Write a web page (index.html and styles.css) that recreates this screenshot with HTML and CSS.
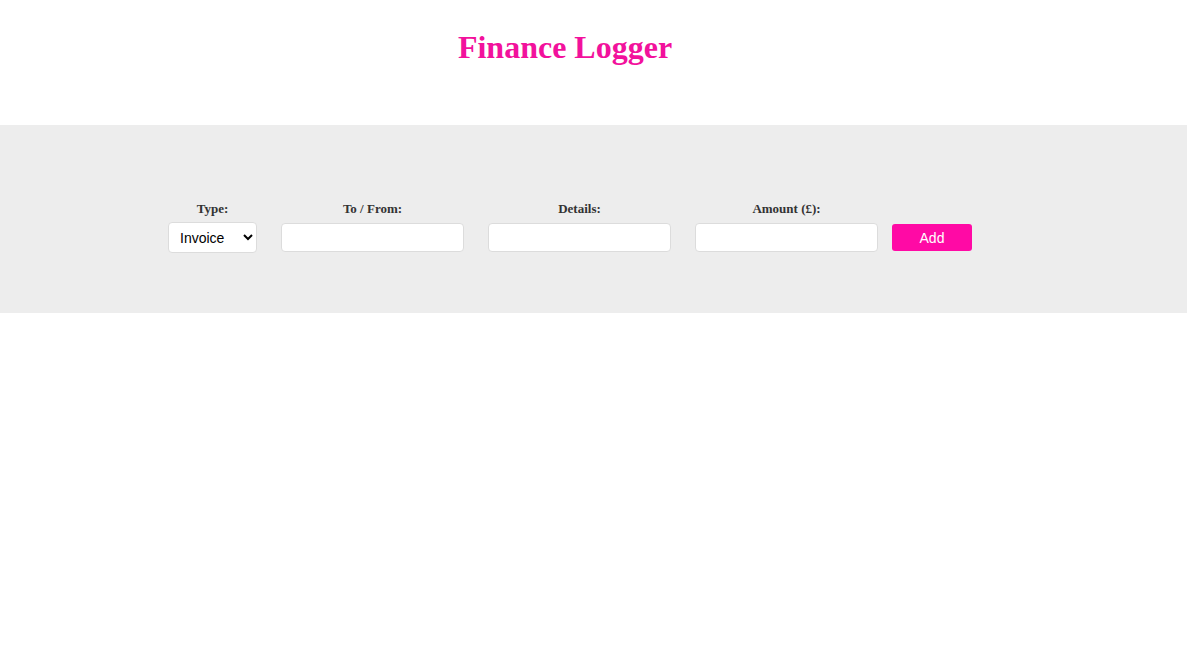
FILE: index.html
```html
<!DOCTYPE html>
<html lang="en">
<head>
<meta charset="utf-8">
<title>Finance Logger</title>
<link rel="stylesheet" href="styles.css">
</head>
<body>
<header class="header">
  <h1 class="title">Finance Logger</h1>
</header>
<section class="band">
  <form class="form">
    <div class="field field-type">
      <label class="label">Type:</label>
      <select class="select">
        <option>Invoice</option>
        <option>Payment</option>
      </select>
    </div>
    <div class="field">
      <label class="label">To / From:</label>
      <input class="input" type="text">
    </div>
    <div class="field">
      <label class="label">Details:</label>
      <input class="input" type="text">
    </div>
    <div class="field field-last">
      <label class="label">Amount (£):</label>
      <input class="input" type="number">
    </div>
    <button class="btn" type="button">Add</button>
  </form>
</section>
</body>
</html>
```
FILE: styles.css
```css
* { box-sizing: border-box; }
html, body { margin: 0; padding: 0; background: #fff; }
body { font-family: "Liberation Serif", "Times New Roman", serif; }

.header {
  height: 125px;
  padding: 29px 57px 0 0;
  text-align: center;
}
.title {
  margin: 0;
  font-size: 32px;
  font-weight: bold;
  color: #f2119c;
  line-height: 36px;
}

.band {
  background: #ededed;
  height: 188px;
  padding: 76px 0 0 168px;
}
.form {
  display: flex;
  align-items: flex-end;
}
.field {
  display: flex;
  flex-direction: column;
  align-items: center;
  margin-right: 24px;
}
.field-last { margin-right: 14px; }
.label {
  font-size: 13px;
  font-weight: bold;
  color: #333;
  line-height: 15px;
  margin-bottom: 7px;
}
.field-type .label { margin-bottom: 6px; }
.select {
  width: 89px;
  height: 31px;
  border: 1px solid #dcdcdc;
  border-radius: 4px;
  background: #fff;
  font-family: "Liberation Sans", Arial, sans-serif;
  font-size: 14px;
  color: #000;
  padding: 0 4px 0 7px;
}
.input {
  width: 183px;
  height: 29px;
  border: 1px solid #dcdcdc;
  border-radius: 4px;
  background: #fff;
  margin-bottom: 1px;
}
.btn {
  width: 80px;
  height: 27px;
  border: none;
  border-radius: 3px;
  background: #ff0aa5;
  color: #fff;
  font-family: "Liberation Sans", Arial, sans-serif;
  font-size: 14px;
  margin-bottom: 2px;
  padding: 0;
}
```
